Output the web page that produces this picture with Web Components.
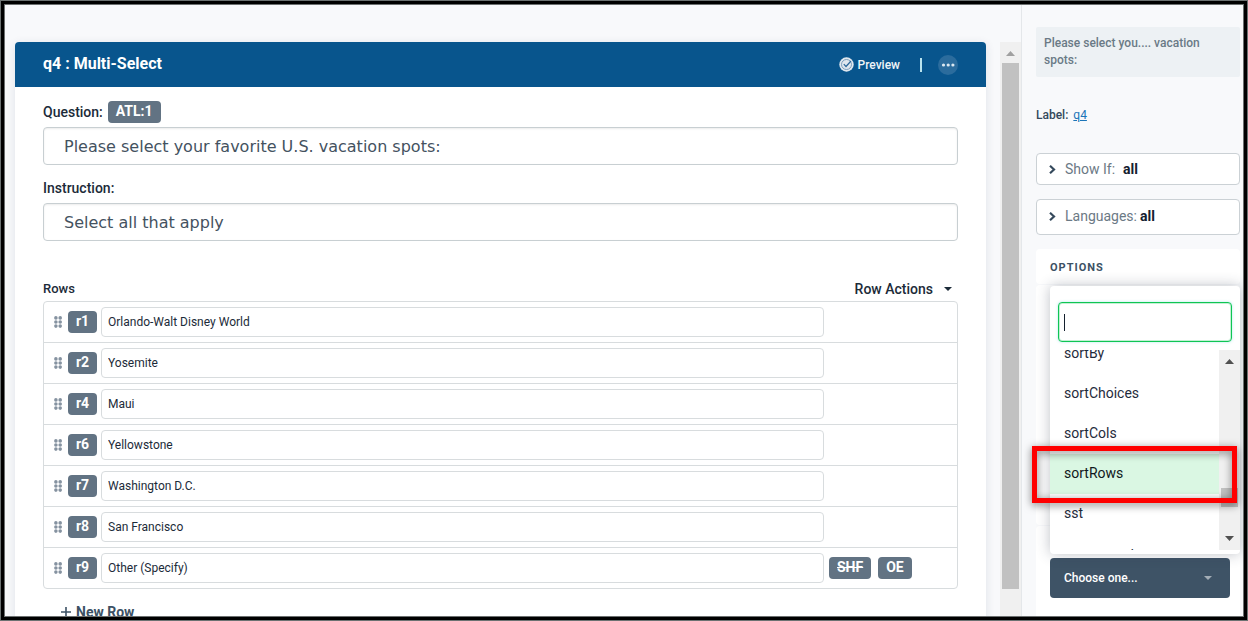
<!DOCTYPE html>
<html lang="en">
<head>
<meta charset="utf-8">
<title>Survey editor</title>
<style>
  body { margin: 0; font-family: Roboto, "Liberation Sans", sans-serif; color: #1c2b39; }
</style>
</head>
<body>
<survey-app>
  <question-card slot="main" heading="q4 : Multi-Select">
    <text-field label="Question:" value="Please select your favorite U.S. vacation spots:"><tag-badge>ATL:1</tag-badge></text-field>
    <text-field label="Instruction:" value="Select all that apply"></text-field>
    <row-list>
      <answer-row tag="r1" value="Orlando-Walt Disney World"></answer-row>
      <answer-row tag="r2" value="Yosemite"></answer-row>
      <answer-row tag="r4" value="Maui"></answer-row>
      <answer-row tag="r6" value="Yellowstone"></answer-row>
      <answer-row tag="r7" value="Washington D.C."></answer-row>
      <answer-row tag="r8" value="San Francisco"></answer-row>
      <answer-row tag="r9" value="Other (Specify)"><tag-badge off>SHF</tag-badge><tag-badge>OE</tag-badge></answer-row>
    </row-list>
  </question-card>
  <side-panel slot="side"></side-panel>
</survey-app>
<script>
const define = (name, html, setup) => {
  const template = document.createElement('template');
  template.innerHTML = '<style>*{box-sizing:border-box}:host{box-sizing:border-box}button,input{font:inherit;color:inherit;margin:0}</style>' + html;
  customElements.define(name, class extends HTMLElement {
    connectedCallback() {
      if (this.shadowRoot) return;
      this.attachShadow({ mode: 'open' }).append(template.content.cloneNode(true));
      if (setup) setup(this, this.shadowRoot);
    }
  });
};

/* Framed application shell with a content column and a side column */
define('survey-app', `
<style>
  :host { display: grid; grid-template-columns: minmax(0, 1fr) 222px; height: 100vh; padding: 5px; background: #f8f9fb; overflow: hidden; position: relative; }
  .frame { position: absolute; inset: 0; border: 1px solid #6c7272; pointer-events: none; box-shadow: inset 0 0 0 3px #000, inset 0 0 0 4px #6c7070; }
  main { display: grid; grid-template-columns: minmax(0, 1fr) 21px; padding: 37px 0 0 10px; gap: 14px; overflow: hidden; }
  aside { border-left: 1px solid #e4e7ea; overflow: hidden; }
</style>
<main><slot name="main"></slot><scroll-track thumb="526" start="0"></scroll-track></main>
<aside><slot name="side"></slot></aside>
<div class="frame"></div>`);

/* Vertical scroll track with arrow ends */
define('scroll-track', `
<style>
  :host { display: flex; flex-direction: column; background: #f0f0f0; --arrow: #a0a0a0; }
  svg { display: block; width: 21px; height: 21px; flex: none; fill: var(--arrow); }
  .rail { flex: 1; min-height: 0; padding: var(--start) 2px 0; overflow: hidden; }
  .thumb { height: var(--thumb); background: #c1c1c1; }
  .down { display: none; }
  :host([both]) { --arrow: #505050; }
  :host([both]) .down { display: block; }
</style>
<svg viewBox="0 0 21 21"><path d="M6 14h9l-4.500-5z"/></svg>
<div class="rail"><div class="thumb"></div></div>
<svg class="down" viewBox="0 0 21 21"><path d="M6 7h9l-4.500 5z"/></svg>`,
(el) => {
  el.style.setProperty('--thumb', el.getAttribute('thumb') + 'px');
  el.style.setProperty('--start', el.getAttribute('start') + 'px');
});

define('tag-badge', `
<style>
  :host { display: inline-flex; align-items: center; height: 22px; padding: 0 8px 2px; border-radius: 4px; background: #627383; color: #fff; font-size: 14px; line-height: 20px; font-weight: 700; }
  :host([off]) { text-decoration: line-through; }
</style><slot></slot>`);

define('question-card', `
<style>
  :host { display: block; background: #fff; border-radius: 4px 4px 0 0; box-shadow: 0 2px 10px rgba(40,60,90,.12); }
  header { display: flex; align-items: center; height: 45px; padding: 0 28px; border-radius: 4px 4px 0 0; background: #08558d; color: #fff; }
  h1 { flex: 1; margin: 0; padding-bottom: 2px; font-size: 16px; line-height: 20px; font-weight: 700; }
  button { border: 0; background: none; padding: 0; display: flex; align-items: center; }
  .preview { gap: 4px; font-size: 12px; line-height: 16px; font-weight: 500; color: #eef4f8; }
  .bar { width: 2px; height: 14px; margin: 1px 16px 0 20px; background: #b9e3ee; }
  .more { width: 20px; height: 20px; border-radius: 50%; background: #2b6c9d; }
  .body { padding: 12px 28px 0; }
</style>
<header>
  <h1></h1>
  <button class="preview"><svg width="15" height="15" viewBox="0 0 15 15"><circle cx="7.500" cy="7.500" r="7.200" fill="#dfe7ee"/><circle cx="7.500" cy="7.500" r="5" fill="none" stroke="#7c9fbd" stroke-width="1"/><path d="M4.800 7.200l2.200 2.300 5-5.500" fill="none" stroke="#2c689a" stroke-width="1.200"/></svg>Preview</button>
  <span class="bar"></span>
  <button class="more" aria-label="More actions"><svg width="20" height="20" viewBox="0 0 20 20" fill="#dce8f1"><circle cx="5.500" cy="10" r="1.600"/><circle cx="10.200" cy="10" r="1.600"/><circle cx="14.900" cy="10" r="1.600"/></svg></button>
</header>
<div class="body"><slot></slot></div>`,
(el, root) => { root.querySelector('h1').textContent = el.getAttribute('heading'); });

define('text-field', `
<style>
  :host { display: block; margin-bottom: 10px; }
  .top { display: flex; align-items: center; gap: 5px; height: 28px; padding-bottom: 2px; }
  label { font-size: 14px; line-height: 20px; font-weight: 500; }
  input { display: block; width: 100%; height: 38px; padding: 0 20px; border: 1px solid #c8cfd2; border-radius: 4px; background: #fff; box-shadow: inset 0 1px 2px rgba(0,0,0,.08); font: 16px "DejaVu Sans", sans-serif; color: #44525f; }
</style>
<div class="top"><label for="field"></label><slot></slot></div>
<input id="field" type="text">`,
(el, root) => {
  root.querySelector('label').textContent = el.getAttribute('label');
  root.querySelector('input').value = el.getAttribute('value');
});

define('row-list', `
<style>
  :host { display: block; padding-top: 26px; }
  .head { display: flex; justify-content: space-between; align-items: center; height: 24px; }
  h2 { margin: 0; font-size: 13px; line-height: 20px; font-weight: 500; }
  button { display: flex; align-items: center; border: 0; padding: 0; background: none; font-size: 14px; line-height: 20px; font-weight: 500; }
  .actions { gap: 11px; padding-right: 6px; }
  .rows { border: 1px solid #d8dcde; border-radius: 4px; }
  .add { gap: 4px; margin: 13px 0 0 17px; color: #3c5164; font-weight: 700; }
</style>
<div class="head"><h2>Rows</h2><button class="actions">Row Actions<svg width="8" height="4" viewBox="0 0 8 4"><path d="M0 0h8l-4 4z" fill="#1c2b39"/></svg></button></div>
<div class="rows"><slot></slot></div>
<button class="add"><svg width="12" height="12" viewBox="0 0 12 12"><path d="M6 1v10M1 6h10" stroke="#3c5164" stroke-width="1.600"/></svg>New Row</button>`);

define('answer-row', `
<style>
  :host { display: grid; grid-template-columns: 14px 33px minmax(0, 1fr) 133px; align-items: center; height: 41px; padding-left: 10px; border-bottom: 1px solid #d8dcde; }
  :host(:last-child) { height: 40px; border-bottom: 0; }
  .tag { width: 29px; padding: 0 0 2px; justify-content: center; }
  input { width: 100%; height: 30px; padding: 0 6px; border: 1px solid #d8dcde; border-radius: 4px; background: #fff; font-size: 12px; font-weight: 400; }
  .extra { display: flex; gap: 7px; padding-left: 5px; }
</style>
<svg width="8" height="12" viewBox="0 0 8 12" fill="#8592a0"><circle cx="1.900" cy="1.900" r="1.800"/><circle cx="6.200" cy="1.900" r="1.800"/><circle cx="1.900" cy="6" r="1.800"/><circle cx="6.200" cy="6" r="1.800"/><circle cx="1.900" cy="10.100" r="1.800"/><circle cx="6.200" cy="10.100" r="1.800"/></svg>
<tag-badge class="tag"></tag-badge>
<input type="text">
<div class="extra"><slot></slot></div>`,
(el, root) => {
  const input = root.querySelector('input');
  root.querySelector('.tag').textContent = el.getAttribute('tag');
  input.value = el.getAttribute('value');
  input.setAttribute('aria-label', el.getAttribute('tag'));
});

/* Collapsed setting: chevron, name, current value */
define('fold-box', `
<style>
  :host { display: block; }
  button { display: flex; align-items: center; width: 100%; height: var(--h, 32px); padding: 0 11px var(--drop, 0px) 12px; border: 1px solid #cbd1d5; border-radius: 4px; background: #fff; font-size: 14px; line-height: 20px; color: #6b7985; }
  svg { margin-right: 9px; }
  b { margin-left: var(--space, 8px); font-weight: 700; color: #14202e; }
</style>
<button><svg width="7" height="9" viewBox="0 0 7 9"><path d="M1 .8L5 4.500 1 8.200" fill="none" stroke="#35495c" stroke-width="2.200"/></svg><span></span><b></b></button>`,
(el, root) => {
  root.querySelector('span').textContent = el.getAttribute('label');
  root.querySelector('b').textContent = el.getAttribute('value');
});

define('option-menu', `
<style>
  :host { display: block; padding: 16px 0 4px; border-radius: 4px; background: #fff; box-shadow: 0 0 14px rgba(40,50,70,.3); }
  .search { position: relative; margin: 0 8px; }
  input { display: block; width: 100%; height: 40px; padding: 0 5px; border: 1px solid #0fc553; border-radius: 4px; outline: 0; background: #fff; box-shadow: inset 0 0 0 1px rgba(15,197,83,.25), 0 0 3px rgba(0,190,200,.3); font-size: 16px; caret-color: transparent; }
  .caret { position: absolute; left: 6px; top: 12px; width: 1px; height: 17px; background: #14202e; pointer-events: none; }
  .scroll { display: grid; grid-template-columns: minmax(0, 1fr) 21px; height: 200px; margin-top: 8px; }
  ul { margin: 0; padding: 0; list-style: none; overflow: hidden; }
  li { height: 40px; padding: 9px 14px 11px; font-size: 14px; line-height: 20px; color: #1f2b3c; }
  li:first-child { margin-top: -16px; }
  li:last-child { padding: 11px 14px 9px; }
  li.on { background: #daf7e3; color: #101820; }
</style>
<div class="search"><input type="text" aria-label="Search options"><span class="caret"></span></div>
<div class="scroll">
  <ul><li>sortBy</li><li>sortChoices</li><li>sortCols</li><li class="on">sortRows</li><li>sst</li><li>transposed</li></ul>
  <scroll-track both thumb="19" start="117"></scroll-track>
</div>`);

define('side-panel', `
<style>
  :host { display: block; padding: 0 3px 0 14px; }
  .summary { margin: 22px 0 0; padding: 8px; min-height: 50px; border-radius: 2px; background: #edf1f4; color: #6a7a86; font-size: 12px; line-height: 17px; font-weight: 500; }
  .label { margin: 28px 0 0; font-size: 12px; line-height: 20px; font-weight: 500; color: #34495c; }
  .label a { margin-left: 2px; color: #1b75b8; font-weight: 400; }
  fold-box { margin-top: 28px; }
  fold-box + fold-box { margin-top: 14px; --h: 36px; --space: 3px; --drop: 2px; }
  .box { background: #fff; border-radius: 4px; }
  h2.box { margin: 14px 0 1px; height: 35px; padding: 9px 14px; font-size: 11px; line-height: 20px; font-weight: 700; letter-spacing: 1px; color: #3c5164; }
  .blank { height: 240px; margin-bottom: 1px; }
  .choose { position: relative; padding: 32px 10px 32px 14px; }
  .choose > button { display: flex; justify-content: space-between; align-items: center; width: 100%; height: 40px; padding: 0 18px 0 14px; border: 0; border-radius: 4px; background: #3e5366; color: #fff; font-size: 12px; font-weight: 500; }
  option-menu { position: absolute; left: 14px; right: 0; bottom: 76px; }
  .mark { position: absolute; left: -4px; right: 3px; bottom: 127px; height: 57px; border: 5px solid #f00; filter: drop-shadow(0 2px 4px rgba(0,0,0,.55)); pointer-events: none; }
</style>
<p class="summary">Please select you.... vacation spots:</p>
<p class="label">Label: <a href="#q4">q4</a></p>
<fold-box label="Show If:" value="all"></fold-box>
<fold-box label="Languages:" value="all"></fold-box>
<h2 class="box">OPTIONS</h2>
<div class="box blank"></div>
<div class="box choose">
  <button>Choose one...<svg width="8" height="4" viewBox="0 0 8 4"><path d="M0 0h8l-4 4z" fill="#a3adb6"/></svg></button>
  <option-menu></option-menu>
  <div class="mark"></div>
</div>`);
</script>
</body>
</html>
